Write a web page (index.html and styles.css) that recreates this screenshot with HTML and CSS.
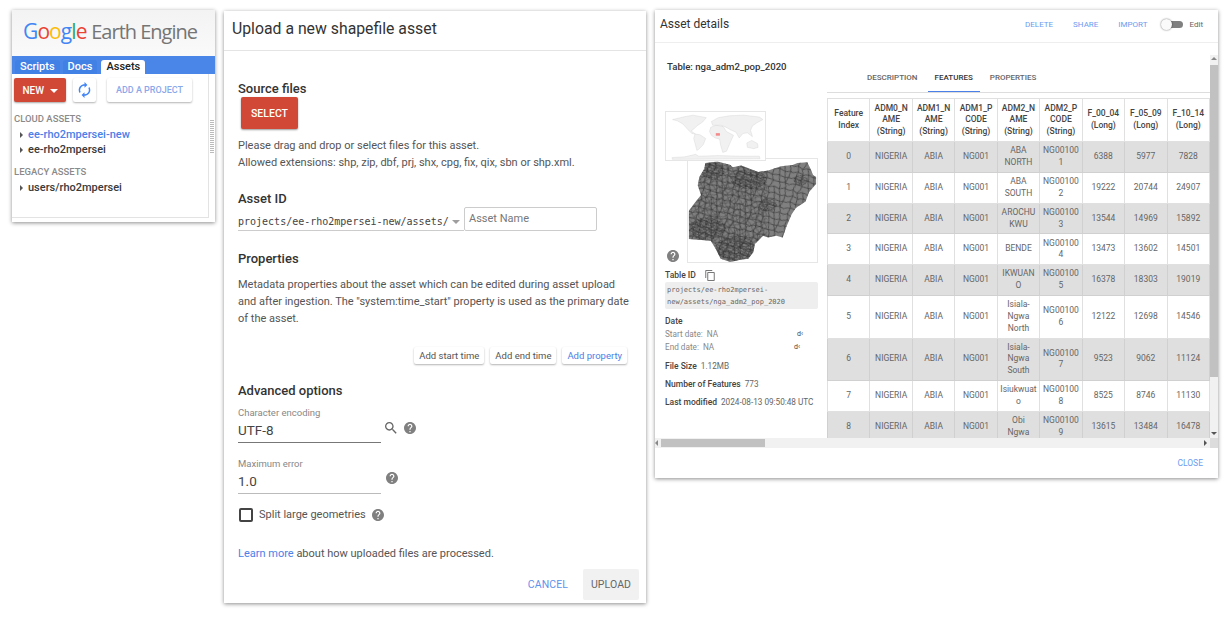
FILE: index.html
```html
<!DOCTYPE html>
<html lang="en">
<head>
  <meta charset="UTF-8">
  <title>Google Earth Engine - assets</title>
  <link rel="stylesheet" href="styles.css">
</head>
<body>

<svg class="sprite" aria-hidden="true">
  <symbol id="i-help" viewBox="2 2 20 20"><path d="M12 2C6.48 2 2 6.48 2 12s4.48 10 10 10 10-4.48 10-10S17.52 2 12 2zm1 17h-2v-2h2v2zm2.07-7.75l-.9.92C13.45 12.9 13 13.5 13 15h-2v-.5c0-1.1.45-2.1 1.17-2.83l1.24-1.26c.37-.36.59-.86.59-1.41 0-1.1-.9-2-2-2s-2 .9-2 2H8c0-2.21 1.79-4 4-4s4 1.79 4 4c0 .88-.36 1.68-.93 2.25z"/></symbol>
  <symbol id="i-search" viewBox="3 3 18 18"><path d="M15.5 14h-.79l-.28-.27C15.41 12.59 16 11.11 16 9.5 16 5.91 13.09 3 9.5 3S3 5.91 3 9.5 5.91 16 9.5 16c1.61 0 3.09-.59 4.23-1.57l.27.28v.79l5 4.99L20.49 19l-4.99-5zm-6 0C7.01 14 5 11.99 5 9.5S7.01 5 9.5 5 14 7.01 14 9.5 11.99 14 9.5 14z"/></symbol>
  <symbol id="i-renew" viewBox="4 1 16 22"><path d="M12 6v3l4-4-4-4v3c-4.42 0-8 3.58-8 8 0 1.57.46 3.03 1.24 4.26L6.7 14.8c-.45-.83-.7-1.79-.7-2.8 0-3.31 2.69-6 6-6zm6.76 1.74L17.3 9.2c.44.84.7 1.79.7 2.8 0 3.31-2.69 6-6 6v-3l-4 4 4 4v-3c4.42 0 8-3.58 8-8 0-1.57-.46-3.03-1.24-4.26z"/></symbol>
  <symbol id="i-copy" viewBox="2 1 19 22"><path d="M16 1H4c-1.1 0-2 .9-2 2v14h2V3h12V1zm3 4H8c-1.1 0-2 .9-2 2v14c0 1.1.9 2 2 2h11c1.1 0 2-.9 2-2V7c0-1.1-.9-2-2-2zm0 16H8V7h11v14z"/></symbol>
</svg>

<!-- assets panel -->
<section class="panel assets">
  <div class="logo"><span class="g-blue">G</span><span class="g-red">o</span><span class="g-yellow">o</span><span class="g-blue">g</span><span class="g-green">l</span><span class="g-red">e</span> <span class="logo-name">Earth Engine</span></div>
  <div class="tabbar">
    <span class="tab">Scripts</span>
    <span class="tab">Docs</span>
    <span class="tab active">Assets</span>
  </div>
  <div class="assets-main">
    <div class="assets-tree">
      <div class="toolbar">
        <button class="btn-new">NEW <i class="caret"></i></button>
        <button class="btn-icon"><svg class="icon-renew"><use href="#i-renew"/></svg></button>
        <button class="btn-project">ADD A PROJECT</button>
      </div>
      <h4 class="tree-head">CLOUD ASSETS</h4>
      <div class="tree-item selected"><i class="arrow"></i>ee-rho2mpersei-new</div>
      <div class="tree-item"><i class="arrow"></i>ee-rho2mpersei</div>
      <h4 class="tree-head legacy">LEGACY ASSETS</h4>
      <div class="tree-item"><i class="arrow"></i>users/rho2mpersei</div>
    </div>
    <div class="splitter"><span class="grip"></span></div>
  </div>
</section>

<!-- upload dialog -->
<section class="panel upload">
  <h2 class="upload-title">Upload a new shapefile asset</h2>
  <div class="upload-body">
    <h3 class="sec first">Source files</h3>
    <button class="btn-select">SELECT</button>
    <p class="hint">Please drag and drop or select files for this asset.<br>Allowed extensions: shp, zip, dbf, prj, shx, cpg, fix, qix, sbn or shp.xml.</p>

    <h3 class="sec asset-id">Asset ID</h3>
    <div class="asset-row">
      <div class="asset-path">projects/ee-rho2mpersei-new/assets/<i class="caret grey"></i></div>
      <div class="asset-name">Asset Name</div>
    </div>

    <h3 class="sec props">Properties</h3>
    <p class="hint meta">Metadata properties about the asset which can be edited during asset upload and after ingestion. The "system:time_start" property is used as the primary date of the asset.</p>
    <div class="prop-btns">
      <button class="btn-small">Add start time</button>
      <button class="btn-small">Add end time</button>
      <button class="btn-small blue">Add property</button>
    </div>

    <h3 class="sec advanced">Advanced options</h3>
    <div class="field-row">
      <div class="field dark">
        <label>Character encoding</label>
        <div class="value">UTF-8</div>
      </div>
      <svg class="icon-search"><use href="#i-search"/></svg>
      <svg class="icon-help"><use href="#i-help"/></svg>
    </div>
    <div class="field-row second">
      <div class="field">
        <label>Maximum error</label>
        <div class="value">1.0</div>
      </div>
      <svg class="icon-help near"><use href="#i-help"/></svg>
    </div>
    <div class="check-row">
      <span class="checkbox"></span>
      <span>Split large geometries</span>
      <svg class="icon-help"><use href="#i-help"/></svg>
    </div>
    <p class="hint learn"><a href="#learn">Learn more</a> about how uploaded files are processed.</p>
  </div>
  <div class="upload-actions">
    <button class="btn-flat blue">CANCEL</button>
    <button class="btn-flat filled">UPLOAD</button>
  </div>
</section>

<!-- asset details dialog -->
<section class="panel details">
  <div class="details-head">
    <h2>Asset details</h2>
    <a class="act" href="#delete">DELETE</a>
    <a class="act" href="#share">SHARE</a>
    <a class="act" href="#import">IMPORT</a>
    <span class="toggle"><i></i></span>
    <span class="edit">Edit</span>
  </div>
  <div class="details-body">
    <div class="info">
      <div class="info-title">Table: nga_adm2_pop_2020</div>
      <div class="maps">
        <svg class="world" viewBox="30 18 302 152">
          <g fill="#f1f1f1" stroke="#c8c8c8" stroke-width="1">
            <path d="M45 42 70 36 82 33 110 28 152 36 140 50 122 62 112 72 104 78 112 84 118 88 106 86 92 72 78 56 60 46Z"/>
            <path d="M116 88 132 90 150 102 142 122 128 136 122 140 118 124 112 102Z"/>
            <path d="M166 66 184 60 205 64 216 80 238 92 228 114 216 142 204 146 197 122 194 104 180 100 168 92 162 80Z"/>
            <path d="M172 60 168 48 190 36 225 30 270 28 320 34 331 42 312 52 298 62 292 76 298 96 282 84 268 86 256 100 246 82 228 74 214 66 198 60Z"/>
            <path d="M280 116 296 108 314 118 316 130 302 134 282 130Z"/>
            <path d="M44 162 84 160 118 152 128 158 190 156 260 158 320 158 322 166 44 168Z"/>
          </g>
          <rect x="182" y="85" width="13" height="8" fill="#f48a8a"/>
        </svg>
        <svg class="nigeria" viewBox="97 160 391 315">
          <defs>
            <path id="cells" d="M0 12 18 6 36 16 58 8 82 14 104 6 120 12M18 6 22 30 0 38M22 30 44 38 36 16M44 38 66 32 58 8M66 32 90 40 82 14M90 40 112 34 104 6M112 34 120 38M22 30 16 56 0 62M44 38 40 62 16 56M66 32 70 58 40 62M90 40 94 64 70 58M112 34 108 60 94 64M108 60 120 62M16 56 24 80 0 86M40 62 50 84 24 80M70 58 76 86 50 84M94 64 100 84 76 86M108 60 100 84 120 90M24 80 18 100M50 84 46 100M76 86 82 100M100 84 106 100M18 0 18 6M46 0 36 16M82 0 82 14M106 0 104 6" fill="none" stroke="#2b2b2b"/>
            <pattern id="mesh" width="120" height="100" patternUnits="userSpaceOnUse" patternTransform="rotate(13) scale(0.75)">
              <use href="#cells" stroke-width="2.4"/>
            </pattern>
            <pattern id="mesh-b" width="120" height="100" patternUnits="userSpaceOnUse" patternTransform="rotate(68) scale(0.6)">
              <use href="#cells" stroke-width="2.6"/>
            </pattern>
            <pattern id="fine" width="18" height="16" patternUnits="userSpaceOnUse" patternTransform="rotate(27)">
              <path d="M0 4 7 2 12 6 18 3M7 2 5 10 0 12M5 10 11 12 12 6M11 12 9 16M11 12 18 10" fill="none" stroke="#222" stroke-width="1.4"/>
            </pattern>
            <filter id="soft"><feGaussianBlur stdDeviation="1.2"/></filter>
            <clipPath id="nga"><path d="M148 172 185 168 225 178 232 185 258 180 280 188 310 200 340 195 380 182 415 178 430 172 460 170 470 190 478 210 488 215 488 235 465 262 455 290 425 310 412 330 395 370 385 400 365 395 340 400 325 395 300 420 295 445 280 465 255 468 225 475 195 465 180 435 165 410 97 405 97 320 115 295 135 270 125 240 130 215 145 190Z"/></clipPath>
          </defs>
          <g clip-path="url(#nga)">
            <rect x="97" y="160" width="391" height="315" fill="#808080"/>
            <g filter="url(#soft)">
              <rect x="97" y="160" width="391" height="315" fill="url(#mesh)"/>
              <rect x="97" y="160" width="240" height="315" fill="url(#mesh-b)" opacity="0.7"/>
              <ellipse cx="280" cy="222" rx="55" ry="30" fill="url(#fine)"/>
              <ellipse cx="170" cy="195" rx="38" ry="24" fill="url(#fine)"/>
              <ellipse cx="155" cy="372" rx="55" ry="34" fill="url(#fine)"/>
              <ellipse cx="240" cy="432" rx="60" ry="38" fill="url(#fine)"/>
              <ellipse cx="440" cy="225" rx="22" ry="16" fill="url(#fine)"/>
              <ellipse cx="340" cy="300" rx="28" ry="20" fill="url(#fine)"/>
            </g>
          </g>
        </svg>
        <svg class="icon-help map-help"><use href="#i-help"/></svg>
      </div>
      <div class="id-row"><b>Table ID</b><svg class="icon-copy"><use href="#i-copy"/></svg></div>
      <div class="id-box">projects/ee-rho2mpersei-new/assets/nga_adm2_pop_2020</div>
      <div class="info-line date"><b>Date</b></div>
      <div class="info-line date-row"><span class="d-label">Start date:&nbsp; NA</span><span class="d-cut start">d‹</span></div>
      <div class="info-line date-row"><span class="d-label">End date:&nbsp; NA</span><span class="d-cut end">d‹</span></div>
      <div class="info-line size"><b>File Size</b> 1.12MB</div>
      <div class="info-line count"><b>Number of Features</b> 773</div>
      <div class="info-line count"><b>Last modified</b> 2024-08-13 09:50:48 UTC</div>
    </div>
    <div class="features">
      <div class="feature-tabs">
        <span>DESCRIPTION</span>
        <span class="active">FEATURES</span>
        <span>PROPERTIES</span>
      </div>
      <div class="table-clip">
        <table>
          <thead>
            <tr>
              <th>Feature Index</th>
              <th>ADM0_NAME (String)</th>
              <th>ADM1_NAME (String)</th>
              <th>ADM1_PCODE (String)</th>
              <th>ADM2_NAME (String)</th>
              <th>ADM2_PCODE (String)</th>
              <th>F_00_04 (Long)</th>
              <th>F_05_09 (Long)</th>
              <th>F_10_14 (Long)</th>
            </tr>
          </thead>
          <tbody>
            <tr><td>0</td><td>NIGERIA</td><td>ABIA</td><td>NG001</td><td>ABA NORTH</td><td>NG001001</td><td>6388</td><td>5977</td><td>7828</td></tr>
            <tr><td>1</td><td>NIGERIA</td><td>ABIA</td><td>NG001</td><td>ABA SOUTH</td><td>NG001002</td><td>19222</td><td>20744</td><td>24907</td></tr>
            <tr><td>2</td><td>NIGERIA</td><td>ABIA</td><td>NG001</td><td>AROCHUKWU</td><td>NG001003</td><td>13544</td><td>14969</td><td>15892</td></tr>
            <tr><td>3</td><td>NIGERIA</td><td>ABIA</td><td>NG001</td><td>BENDE</td><td>NG001004</td><td>13473</td><td>13602</td><td>14501</td></tr>
            <tr><td>4</td><td>NIGERIA</td><td>ABIA</td><td>NG001</td><td>IKWUANO</td><td>NG001005</td><td>16378</td><td>18303</td><td>19019</td></tr>
            <tr><td>5</td><td>NIGERIA</td><td>ABIA</td><td>NG001</td><td>Isiala-Ngwa North</td><td>NG001006</td><td>12122</td><td>12698</td><td>14546</td></tr>
            <tr><td>6</td><td>NIGERIA</td><td>ABIA</td><td>NG001</td><td>Isiala-Ngwa South</td><td>NG001007</td><td>9523</td><td>9062</td><td>11124</td></tr>
            <tr><td>7</td><td>NIGERIA</td><td>ABIA</td><td>NG001</td><td>Isiukwuato</td><td>NG001008</td><td>8525</td><td>8746</td><td>11130</td></tr>
            <tr><td>8</td><td>NIGERIA</td><td>ABIA</td><td>NG001</td><td>Obi<br>Ngwa</td><td>NG001009</td><td>13615</td><td>13484</td><td>16478</td></tr>
          </tbody>
        </table>
      </div>
    </div>
    <div class="vbar">
      <i class="tri up"></i>
      <div class="vthumb"></div>
      <i class="tri down"></i>
    </div>
  </div>
  <div class="hbar">
    <div class="htrack">
      <i class="tri left"></i>
      <div class="hthumb"></div>
      <i class="tri right"></i>
    </div>
    <div class="corner"></div>
  </div>
  <div class="details-foot"><a class="act" href="#close">CLOSE</a></div>
</section>

</body>
</html>
```

FILE: styles.css
```css
* {
  box-sizing: border-box;
}
html, body {
  height: 620px;
  overflow: hidden;
}
body {
  margin: 0;
  padding: 10px 0 0 12px;
  display: flex;
  align-items: flex-start;
  gap: 9px;
  background: #fff;
  color: #333;
  font-family: Roboto, "Liberation Sans", sans-serif;
}
.sprite {
  display: none;
}
button {
  font-family: inherit;
  border: none;
  cursor: pointer;
  padding: 0;
}
h2, h3, h4, p {
  margin: 0;
}
.panel {
  background: #fff;
  box-shadow: 0 1px 4px rgba(0,0,0,0.45);
  flex: none;
}

/* assets panel */
.assets {
  width: 203px;
  height: 212px;
}
.logo {
  height: 46px;
  padding: 6px 0 0 11px;
  background: linear-gradient(#f3f3f3, #fafafa);
  font-family: "Open Sans", sans-serif;
  font-size: 21px;
  line-height: 30px;
  white-space: nowrap;
  letter-spacing: -0.9px;
}
.g-blue { color: #4285f4; }
.g-red { color: #ea4335; }
.g-yellow { color: #fbbc05; }
.g-green { color: #34a853; }
.logo-name {
  color: #757575;
  font-size: 20px;
  letter-spacing: -1px;
}
.tabbar {
  height: 18px;
  background: #4a86e8;
  display: flex;
  align-items: flex-end;
  padding-left: 3px;
  gap: 3px;
}
.tab {
  height: 14px;
  padding: 0 5px;
  border-radius: 3px 3px 0 0;
  color: #fff;
  font-size: 11px;
  font-weight: 500;
  line-height: 14px;
  background: #4180e4;
}
.tab.active {
  margin-left: 1px;
  background: #fff;
  color: #222;
}
.assets-main {
  display: flex;
  height: 144px;
}
.assets-tree {
  flex: 1;
  border-right: 1px solid #e3e3e3;
  border-bottom: 1px solid #e3e3e3;
  padding: 4px 0 0 2px;
}
.splitter {
  width: 6px;
  display: flex;
  align-items: flex-start;
  justify-content: center;
  padding-top: 46px;
}
.grip {
  width: 4px;
  height: 33px;
  background: repeating-linear-gradient(#bbb 0 1px, #fff 1px 2px);
}
.toolbar {
  display: flex;
  height: 24px;
}
.btn-new {
  width: 52px;
  background: #d14836;
  color: #fff;
  font-size: 10px;
  font-weight: 500;
  border-radius: 2px;
  box-shadow: 0 1px 2px rgba(0,0,0,0.35);
}
.caret {
  display: inline-block;
  margin-left: 3px;
  border: 4px solid transparent;
  border-top-color: #fff;
  border-bottom: none;
  vertical-align: 1px;
}
.caret.grey {
  border-top-color: #9e9e9e;
  border-width: 4px 4px 0;
  margin-left: 3px;
}
.btn-icon {
  width: 23px;
  margin-left: 7px;
  background: #fff;
  border-radius: 2px;
  box-shadow: 0 1px 2px rgba(0,0,0,0.3);
  display: flex;
  align-items: center;
  justify-content: center;
}
.icon-renew {
  width: 13px;
  height: 16px;
  fill: #4285f4;
}
.btn-project {
  width: 85px;
  margin-left: 11px;
  background: #fff;
  color: #8aa8ea;
  font-size: 9px;
  font-weight: 500;
  border-radius: 2px;
  box-shadow: 0 1px 2px rgba(0,0,0,0.3);
}
.tree-head {
  margin-top: 11px;
  font-size: 9.5px;
  font-weight: 500;
  line-height: 12px;
  color: #8a8a8a;
}
.tree-head.legacy {
  margin-top: 9px;
}
.tree-item {
  display: flex;
  align-items: center;
  height: 15px;
  padding-left: 6px;
  font-size: 11px;
  font-weight: 500;
  color: #3a3a3a;
}
.tree-head + .tree-item {
  margin-top: 2px;
}
.tree-item.selected {
  color: #4a80e8;
}
.arrow {
  width: 0;
  height: 0;
  margin-right: 5px;
  border: 3.5px solid transparent;
  border-left-color: #555;
  border-right: none;
}

/* upload dialog */
.upload {
  width: 422px;
  height: 592px;
  margin-top: 1px;
  display: flex;
  flex-direction: column;
}
.upload-title {
  height: 40px;
  padding: 8px 0 0 8px;
  font-size: 15.8px;
  font-weight: 400;
  line-height: 19px;
  border-bottom: 1px solid #e4e4e4;
}
.upload-body {
  flex: 1;
  padding: 0 14px;
}
.sec {
  font-size: 13px;
  font-weight: 500;
  line-height: 16px;
  color: #333;
}
.sec.first {
  margin-top: 30px;
}
.btn-select {
  display: block;
  width: 57px;
  height: 32px;
  margin: 0 0 0 3px;
  background: #d14836;
  color: #fff;
  font-size: 10.5px;
  font-weight: 500;
  border-radius: 2px;
  box-shadow: 0 1px 2px rgba(0,0,0,0.4);
}
.hint {
  font-size: 11px;
  line-height: 17px;
  color: #555;
}
.btn-select + .hint {
  margin-top: 8px;
}
.sec.asset-id {
  margin-top: 20px;
}
.asset-row {
  display: flex;
  height: 24px;
}
.asset-path {
  width: 226px;
  height: 24px;
  padding-top: 8px;
  border-bottom: 1px solid #ccc;
  font-family: "DejaVu Sans Mono", monospace;
  font-size: 10px;
  line-height: 13px;
  color: #444;
  white-space: nowrap;
}
.asset-name {
  width: 133px;
  height: 24px;
  border: 1px solid #ccc;
  border-radius: 2px;
  padding: 0 4px;
  font-size: 11px;
  line-height: 22px;
  color: #777;
}
.sec.props {
  margin-top: 20px;
}
.meta {
  margin-top: 9px;
  width: 392px;
}
.prop-btns {
  display: flex;
  justify-content: flex-end;
  gap: 6px;
  margin: 20px 5px 0 0;
}
.btn-small {
  height: 17px;
  padding: 0 5px;
  background: #fff;
  color: #555;
  font-size: 9.5px;
  border-radius: 2px;
  box-shadow: 0 1px 2px rgba(0,0,0,0.3);
}
.btn-small.blue {
  color: #4a80e8;
}
.sec.advanced {
  margin-top: 19px;
}
.field-row {
  display: flex;
  height: 37px;
  margin-top: 7px;
}
.field-row.second {
  margin-top: 14px;
}
.field {
  width: 143px;
  border-bottom: 1px solid #bbb;
}
.field.dark {
  border-bottom-color: #777;
}
.field label {
  display: block;
  padding-top: 1px;
  font-size: 9.5px;
  line-height: 12px;
  color: #888;
}
.value {
  margin-top: 2px;
  font-size: 13.5px;
  line-height: 18px;
  color: #444;
}
.icon-search {
  width: 12px;
  height: 12px;
  margin: 16px 0 0 4px;
  fill: #666;
}
.icon-help {
  width: 12px;
  height: 12px;
  margin: 16px 0 0 7px;
  fill: #808080;
  flex: none;
}
.icon-help.near {
  margin: 15px 0 0 5px;
}
.check-row {
  display: flex;
  align-items: center;
  height: 15px;
  margin-top: 13px;
  font-size: 11px;
  color: #555;
}
.check-row .icon-help {
  margin: 0 0 0 6px;
}
.checkbox {
  width: 14px;
  height: 14px;
  margin: 0 6px 0 1px;
  border: 2px solid #444;
  border-radius: 2px;
}
.learn {
  margin-top: 23px;
}
.learn a {
  color: #4a80e8;
  text-decoration: none;
}
.upload-actions {
  display: flex;
  align-items: center;
  justify-content: flex-end;
  gap: 15px;
  height: 31px;
  margin-bottom: 3px;
  padding-right: 7px;
}
.btn-flat {
  height: 31px;
  background: none;
  font-size: 10.5px;
  color: #666;
  letter-spacing: 0.1px;
}
.btn-flat.blue {
  color: #5f92ec;
}
.btn-flat.filled {
  width: 56px;
  background: #f1f1f1;
  border-radius: 2px;
}

/* asset details dialog */
.details {
  width: 563px;
  height: 468px;
  display: flex;
  flex-direction: column;
}
.details-head {
  height: 33px;
  flex: none;
  display: flex;
  align-items: center;
  border-bottom: 1px solid #eee;
  padding: 0 15px 4px 5px;
}
.details-head h2 {
  flex: 1;
  font-size: 12px;
  font-weight: 400;
  color: #333;
}
.act {
  margin-right: 20px;
  font-size: 8px;
  color: #6d9cf0;
  text-decoration: none;
}
.toggle {
  width: 22px;
  height: 11px;
  margin-left: -6px;
  position: relative;
}
.toggle::before {
  content: "";
  position: absolute;
  left: 4px;
  right: 0;
  top: 2px;
  height: 7px;
  border-radius: 4px;
  background: #808080;
}
.toggle i {
  position: absolute;
  left: 0;
  top: 0;
  width: 11px;
  height: 11px;
  border-radius: 50%;
  background: #fafafa;
  box-shadow: 0 0 2px rgba(0,0,0,0.6);
}
.edit {
  margin-left: 6px;
  font-size: 8px;
  color: #666;
}
.details-body {
  height: 395px;
  flex: none;
  display: flex;
}
.info {
  width: 172px;
  flex: none;
  padding-left: 10px;
  font-size: 8.2px;
  color: #666;
}
.info b {
  margin-right: 2px;
  font-size: 8.5px;
  font-weight: 500;
  color: #444;
}
.info-title {
  margin: 18px 0 0 2px;
  font-size: 9.6px;
  font-weight: 500;
  line-height: 12px;
  color: #333;
}
.maps {
  position: relative;
  margin-top: 38px;
}
.world {
  display: block;
  position: relative;
  z-index: 1;
  width: 101px;
  height: 50px;
  background: #fff;
  border: 1px solid #e6e6e6;
}
.nigeria {
  display: block;
  width: 131px;
  height: 105px;
  margin: -3px 0 0 22px;
  border: 1px solid #e6e6e6;
}
.map-help {
  position: absolute;
  left: 2px;
  bottom: 1px;
  margin: 0;
}
.id-row {
  display: flex;
  align-items: center;
  height: 12px;
  margin-top: 6px;
}
.icon-copy {
  width: 10px;
  height: 11px;
  margin-left: 7px;
  fill: #777;
}
.id-box {
  width: 153px;
  height: 27px;
  margin-top: 1px;
  padding: 2px 2px;
  background: #eee;
  border-radius: 2px;
  font-family: "DejaVu Sans Mono", monospace;
  font-size: 7px;
  line-height: 12px;
  color: #666;
}
.info-line {
  line-height: 12px;
}
.info-line.date {
  margin-top: 6px;
}
.date-row {
  display: flex;
  margin-top: 1px;
}
.d-label {
  color: #888;
}
.d-cut {
  margin-left: auto;
  font-size: 7px;
  color: #444;
}
.d-cut.start {
  margin-right: 24px;
}
.d-cut.end {
  margin-right: 27px;
}
.info-line.size {
  margin-top: 7px;
}
.info-line.count {
  margin-top: 6px;
}
.features {
  width: 383px;
  flex: none;
  display: flex;
  flex-direction: column;
}
.feature-tabs {
  height: 50px;
  flex: none;
  display: flex;
  padding: 17px 0 0 33px;
  border-bottom: 1px solid #ddd;
  font-size: 8px;
  font-weight: 500;
  color: #666;
}
.feature-tabs span {
  height: 32px;
  padding: 13px 7px 0;
  margin: 0 3px 0 0;
  line-height: 10px;
}
.feature-tabs .active {
  color: #333;
  border-bottom: 1px solid #4a80e8;
}
.table-clip {
  margin-top: 5px;
  flex: 1;
  overflow: hidden;
}
table {
  width: 383px;
  table-layout: fixed;
  border-collapse: collapse;
  font-size: 8.5px;
  line-height: 11.7px;
  text-align: center;
  color: #666;
}
th, td {
  padding: 3.2px 2.5px;
  border: 1px solid #e0e0e0;
  overflow-wrap: anywhere;
  vertical-align: middle;
}
th {
  font-weight: 500;
  color: #444;
  padding: 3.5px 3px;
}
tbody tr:nth-child(odd) {
  background: #dfdfdf;
}
tbody tr:nth-child(odd) td {
  border-color: #d0d0d0;
}
.vbar {
  width: 8px;
  margin-top: 12px;
  flex: none;
  background: #f1f1f1;
  position: relative;
}
.vthumb {
  position: absolute;
  top: 10px;
  left: 0;
  right: 0;
  height: 312px;
  background: #c1c1c1;
}
.tri {
  position: absolute;
  width: 0;
  height: 0;
  border: 3px solid transparent;
}
.tri.up {
  top: 2px;
  left: 1px;
  border-bottom-color: #888;
  border-top: none;
}
.tri.down {
  bottom: 3px;
  left: 1px;
  border-top-color: #555;
  border-bottom: none;
}
.hbar {
  height: 10px;
  flex: none;
  display: flex;
}
.htrack {
  flex: 1;
  background: #f1f1f1;
  position: relative;
}
.hthumb {
  position: absolute;
  left: 6px;
  top: 1px;
  bottom: 1px;
  width: 104px;
  background: #c1c1c1;
}
.tri.left {
  left: 0;
  top: 2px;
  border-right-color: #888;
  border-left: none;
}
.tri.right {
  right: 3px;
  top: 2px;
  border-left-color: #555;
  border-right: none;
}
.corner {
  width: 8px;
  background: #dcdcdc;
}
.details-foot {
  flex: 1;
  display: flex;
  align-items: center;
  justify-content: flex-end;
  padding-right: 15px;
}
.details-foot .act {
  margin: 0;
  font-size: 8.5px;
}
```
